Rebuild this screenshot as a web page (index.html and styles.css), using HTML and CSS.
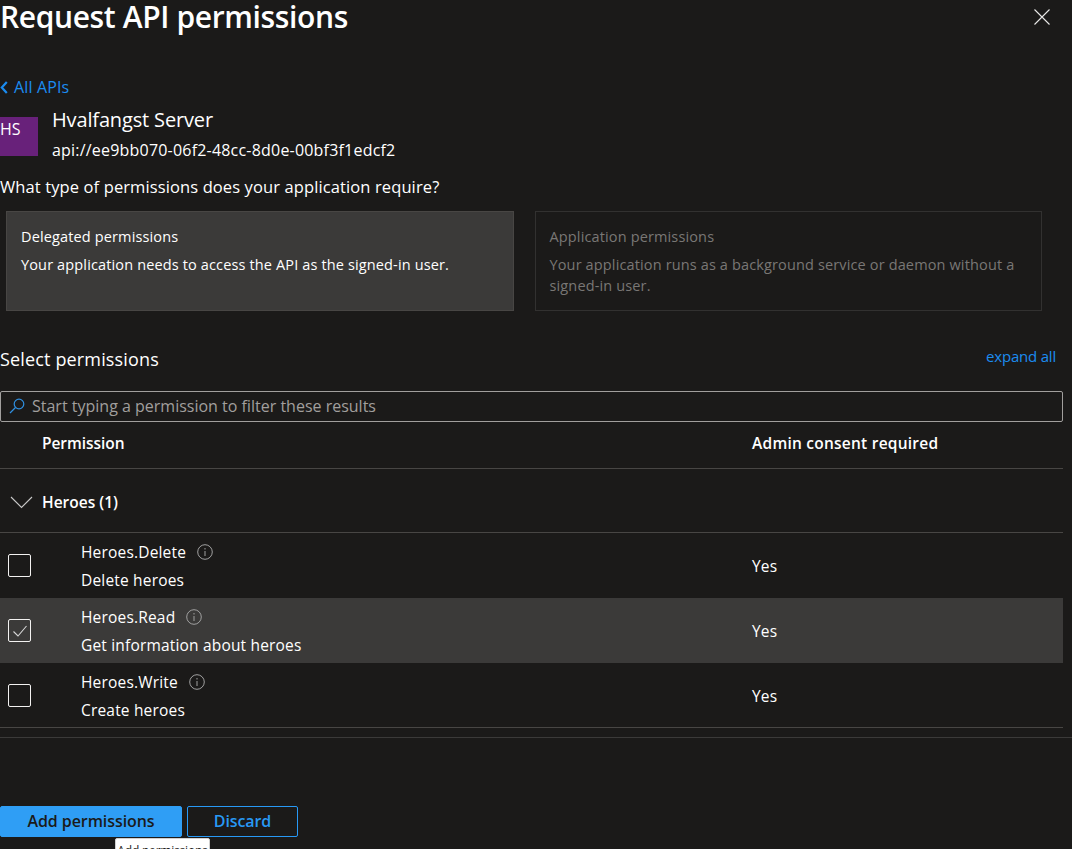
FILE: index.html
```html
<!DOCTYPE html>
<html lang="en">
<head>
<meta charset="utf-8">
<title>Request API permissions</title>
<link rel="stylesheet" href="styles.css">
</head>
<body>
<div class="panel">
  <header class="head">
    <h1 class="title">Request API permissions</h1>
    <svg class="close" width="16" height="16" viewBox="0 0 16 16"><path d="M.5.5l15 15M15.500.5l-15 15" stroke="#e8e8e8" stroke-width="1.100" fill="none"/></svg>
  </header>
  <a class="back"><svg width="8" height="13" viewBox="0 0 8 13"><path d="M6.800 1L1.800 6.500l5 5.500" stroke="#1b8cf0" stroke-width="2.200" fill="none"/></svg><span>All APIs</span></a>
  <div class="app">
    <div class="tile">HS</div>
    <div class="app-text">
      <div class="app-name">Hvalfangst Server</div>
      <div class="app-uri">api://ee9bb070-06f2-48cc-8d0e-00bf3f1edcf2</div>
    </div>
  </div>
  <div class="question">What type of permissions does your application require?</div>
  <div class="cards">
    <div class="card card-on">
      <div class="card-title">Delegated permissions</div>
      <div class="card-desc">Your application needs to access the API as the signed-in user.</div>
    </div>
    <div class="card card-off">
      <div class="card-title">Application permissions</div>
      <div class="card-desc">Your application runs as a background service or daemon without a signed-in user.</div>
    </div>
  </div>
  <div class="select-row">
    <div class="select-title">Select permissions</div>
    <a class="expand">expand all</a>
  </div>
  <div class="search">
    <svg width="16" height="16" viewBox="0 0 16 16"><circle cx="10" cy="6" r="4.800" stroke="#2f8fe0" stroke-width="1.200" fill="none"/><path d="M6.500 9.500L1 15" stroke="#2f8fe0" stroke-width="1.300" fill="none"/></svg>
    <span>Start typing a permission to filter these results</span>
  </div>
  <div class="thead">
    <div class="col-perm">Permission</div>
    <div class="col-admin">Admin consent required</div>
  </div>
  <div class="group">
    <svg width="24" height="14" viewBox="0 0 24 14"><path d="M1 2l10.500 10.500L22 2" stroke="#c8c8c8" stroke-width="1.100" fill="none"/></svg>
    <span>Heroes (1)</span>
  </div>
  <div class="row">
    <div class="check"></div>
    <div class="perm">
      <div class="perm-name">Heroes.Delete<svg class="info" width="16" height="16" viewBox="0 0 16 16"><circle cx="8" cy="8" r="7.300" stroke="#a0a0a0" fill="none"/><path d="M8 7v5M8 4v1.500" stroke="#a0a0a0" fill="none"/></svg></div>
      <div class="perm-desc">Delete heroes</div>
    </div>
    <div class="admin">Yes</div>
  </div>
  <div class="row row-on">
    <div class="check"><svg width="16" height="16" viewBox="0 0 16 16"><path d="M1.500 8.500l4.500 4.500L14.500 3" stroke="#d8d8d8" stroke-width="1.100" fill="none"/></svg></div>
    <div class="perm">
      <div class="perm-name">Heroes.Read<svg class="info" width="16" height="16" viewBox="0 0 16 16"><circle cx="8" cy="8" r="7.300" stroke="#a0a0a0" fill="none"/><path d="M8 7v5M8 4v1.500" stroke="#a0a0a0" fill="none"/></svg></div>
      <div class="perm-desc">Get information about heroes</div>
    </div>
    <div class="admin">Yes</div>
  </div>
  <div class="row row-last">
    <div class="check"></div>
    <div class="perm">
      <div class="perm-name">Heroes.Write<svg class="info" width="16" height="16" viewBox="0 0 16 16"><circle cx="8" cy="8" r="7.300" stroke="#a0a0a0" fill="none"/><path d="M8 7v5M8 4v1.500" stroke="#a0a0a0" fill="none"/></svg></div>
      <div class="perm-desc">Create heroes</div>
    </div>
    <div class="admin">Yes</div>
  </div>
  <div class="rule"></div>
  <div class="actions">
    <button class="btn btn-primary">Add permissions</button>
    <button class="btn btn-outline">Discard</button>
  </div>
</div>
<div class="tooltip">Add permissions</div>
</body>
</html>
```

FILE: styles.css
```css
html, body {
  margin: 0;
  height: 849px;
  overflow: hidden;
  background: #1b1a19;
}
body {
  position: relative;
  color: #fff;
  font-family: "Open Sans", "Noto Sans", sans-serif;
  font-size: 15px;
}
.panel {
  display: flex;
  flex-direction: column;
  width: 1072px;
}
.head {
  display: flex;
  justify-content: space-between;
  align-items: center;
  height: 34px;
  padding-right: 22px;
}
.title {
  margin: 0;
  font-size: 30px;
  font-weight: 600;
  letter-spacing: -0.37px;
  line-height: 34px;
}
.close { margin-top: -1px; }
.back {
  display: flex;
  align-items: center;
  gap: 6px;
  height: 24px;
  margin-top: 41px;
  color: #1b8cf0;
  font-size: 16px;
  letter-spacing: 0.15px;
}
.app {
  display: flex;
  gap: 14px;
  height: 62px;
  margin-top: 7px;
}
.tile {
  width: 38px;
  height: 39px;
  margin-top: 11px;
  background: #68217a;
  font-size: 16px;
  line-height: 24px;
}
.app-name {
  font-size: 20px;
  line-height: 26px;
  letter-spacing: -0.15px;
  padding-top: 1px;
}
.app-uri {
  margin-top: 6px;
  font-size: 16px;
  line-height: 22px;
  letter-spacing: 0.2px;
}
.question {
  margin-top: 7px;
  font-size: 16.500px;
  line-height: 24px;
  letter-spacing: 0.11px;
}
.cards {
  display: flex;
  gap: 21px;
  margin: 12px 30px 0 6px;
}
.card {
  flex: 1;
  box-sizing: border-box;
  height: 100px;
  padding: 14px 14px 0;
  font-size: 14.500px;
  letter-spacing: 0.14px;
}
.card-on {
  background: #3b3a39;
  border: 1px solid #484644;
}
.card-off {
  border: 1px solid #323130;
  color: #797775;
}
.card-title { line-height: 21px; }
.card-desc { margin-top: 7px; line-height: 21px; }
.select-row {
  display: flex;
  justify-content: space-between;
  height: 80px;
  box-sizing: border-box;
  padding: 33px 16px 0 0;
}
.select-title {
  font-size: 18px;
  line-height: 30px;
  letter-spacing: 0.15px;
}
.expand {
  color: #1b8cf0;
  font-size: 15px;
  line-height: 24px;
  letter-spacing: -0.2px;
}
.search {
  display: flex;
  align-items: center;
  gap: 7px;
  box-sizing: border-box;
  width: 1063px;
  height: 31px;
  padding: 0 0 2px 8px;
  border: 1px solid #a19f9d;
  border-radius: 2px;
  color: #a19f9d;
  font-size: 16px;
}
.thead {
  display: flex;
  align-items: center;
  box-sizing: border-box;
  width: 1063px;
  height: 47px;
  padding-bottom: 4px;
  border-bottom: 1px solid #484644;
  font-size: 15.500px;
  font-weight: 600;
  letter-spacing: -0.05px;
}
.col-perm { width: 752px; padding-left: 42px; box-sizing: border-box; }
.col-admin { letter-spacing: 0.24px; }
.group {
  display: flex;
  align-items: center;
  gap: 8px;
  box-sizing: border-box;
  width: 1063px;
  height: 64px;
  padding: 2px 0 0 10px;
  border-bottom: 1px solid #484644;
  font-size: 15.500px;
  font-weight: 600;
}
.row {
  display: flex;
  align-items: center;
  box-sizing: border-box;
  width: 1063px;
  height: 65px;
  padding-left: 8px;
  font-size: 15.500px;
  letter-spacing: 0.18px;
}
.row-on { background: #3b3a39; }
.row-last { border-bottom: 1px solid #484644; }
.row-last .perm { padding-top: 2px; }
.row-last .admin { padding-top: 1px; }
.check {
  display: flex;
  align-items: center;
  justify-content: center;
  box-sizing: border-box;
  width: 23px;
  height: 23px;
  border: 1px solid #f3f2f1;
  border-radius: 2px;
}
.perm { width: 721px; padding-left: 50px; box-sizing: border-box; }
.perm-name { display: flex; align-items: center; gap: 11px; line-height: 22px; }
.perm-desc { margin-top: 6px; line-height: 22px; }
.rule {
  width: 1072px;
  height: 1px;
  margin-top: 9px;
  background: #3b3a39;
}
.actions {
  display: flex;
  gap: 5px;
  margin-top: 68px;
}
.btn {
  box-sizing: border-box;
  height: 31px;
  border-radius: 2px;
  font-family: inherit;
  font-size: 16px;
  font-weight: 600;
  letter-spacing: -0.08px;
  padding: 0 0 2px;
}
.btn-primary {
  width: 182px;
  background: #2f9ef5;
  border: 1px solid #2f9ef5;
  color: #1b1a19;
}
.btn-outline {
  width: 111px;
  background: transparent;
  border: 1px solid #2899f5;
  color: #2899f5;
}
.tooltip {
  position: absolute;
  left: 115px;
  top: 838px;
  box-sizing: border-box;
  width: 95px;
  height: 30px;
  padding-top: 3px;
  background: #fff;
  border: 1px solid #d0d0d0;
  border-radius: 2px;
  color: #1b1a19;
  font-size: 12px;
  letter-spacing: -0.2px;
  text-align: center;
}
```
